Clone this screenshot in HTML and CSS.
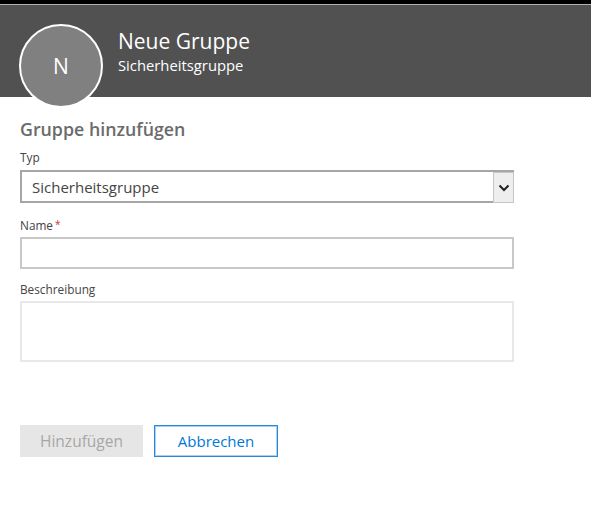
FILE: index.html
```html
<!DOCTYPE html>
<html lang="de">
<head>
<meta charset="utf-8">
<link rel="stylesheet" href="styles.css">
</head>
<body>
<div class="topbar"></div>
<header class="header">
  <div class="avatar">N</div>
  <div class="titles">
    <div class="title">Neue Gruppe</div>
    <div class="subtitle">Sicherheitsgruppe</div>
  </div>
</header>
<main class="content">
  <h2 class="heading">Gruppe hinzufügen</h2>
  <div class="field field-type">
    <div class="label">Typ</div>
    <div class="select">
      <span class="select-text">Sicherheitsgruppe</span>
      <span class="select-btn">
        <svg width="12" height="8" viewBox="0 0 12 8"><path d="M1.5 1.5 L6 6 L10.5 1.5" fill="none" stroke="#222" stroke-width="2"/></svg>
      </span>
    </div>
  </div>
  <div class="field field-name">
    <div class="label">Name<span class="req">*</span></div>
    <div class="input"></div>
  </div>
  <div class="field field-desc">
    <div class="label">Beschreibung</div>
    <div class="textarea"></div>
  </div>
  <div class="actions">
    <div class="btn btn-primary">Hinzufügen</div>
    <div class="btn btn-secondary">Abbrechen</div>
  </div>
</main>
</body>
</html>
```

FILE: styles.css
```css
* { box-sizing: border-box; }
html, body { margin: 0; padding: 0; background: #fff; }
body { font-family: "Open Sans", "Noto Sans", sans-serif; width: 591px; height: 512px; overflow: hidden; }
.topbar { background: #000; border-bottom: 1px solid #b0b0b0; height: 5px; }
.header { height: 92px; background: #515151; display: flex; align-items: flex-start; position: relative; }
.avatar {
  position: absolute; left: 19px; top: 19px;
  width: 84px; height: 84px; border-radius: 50%;
  background: #808080; border: 2px solid #fff;
  color: #fff; font-size: 21px; display: flex; align-items: center; justify-content: center;
}
.titles { margin-left: 118px; margin-top: 23px; color: #fff; }
.title { font-size: 21px; line-height: 26px; }
.subtitle { font-size: 14.8px; line-height: 18px; margin-top: 2px; }
.content { padding: 21px 0 0 20px; width: 514px; }
.heading { margin: 0; font-size: 17.8px; font-weight: 600; color: #6b6b6b; line-height: 22px; }
.label { font-size: 11.8px; color: #444; line-height: 16px; height: 16px; margin-bottom: 5px; }
.field-type { margin-top: 9px; }
.field-name { margin-top: 14px; }
.field-name .label { margin-bottom: 4px; }
.field-desc { margin-top: 12px; }
.field-desc .label { margin-bottom: 4px; }
.req { color: #c33; margin-left: 2px; font-size: 10px; position: relative; top: -2px; line-height: 0; }
.select {
  height: 33px; border: 2px solid #a6a6a6; display: flex; align-items: center; justify-content: space-between;
}
.select-text { font-size: 15px; color: #444; padding-left: 10px; }
.select-btn {
  width: 21px; height: 31px; background: #eeeeee; border: 1px solid #c6c6c6; margin-right: -2px; margin-top: 2px;
  display: flex; align-items: center; justify-content: center;
}
.input { height: 32px; border: 2px solid #c8c8c8; }
.textarea { height: 61px; border: 2px solid #e8e8e8; }
.actions { display: flex; gap: 11px; margin-top: 63px; }
.btn { height: 32px; width: 124px; display: flex; align-items: center; justify-content: center; font-size: 15.5px; }
.btn-primary { background: #e6e6e6; color: #a6a6a6; width: 123px; }
.btn-secondary { border: 1px solid #2b88d8; box-shadow: inset 0 0 0 1px #a9d0f0; color: #0078d7; font-size: 15px; }
```
